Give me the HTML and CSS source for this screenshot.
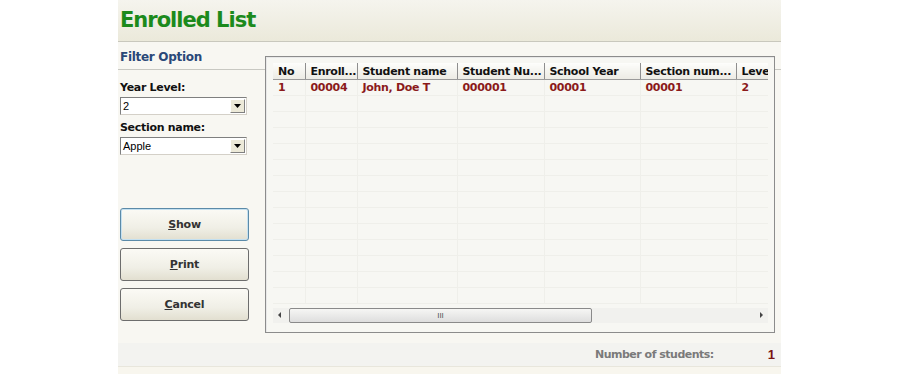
FILE: index.html
```html
<!DOCTYPE html>
<html lang="en">
<head>
    <meta charset="UTF-8">
    <title>Enrolled List</title>
    <link rel="stylesheet" href="styles.css">
</head>
<body>
    <div class="app">
        <header class="title-bar">Enrolled List</header>

        <div class="main">
            <div class="filter">
                <div class="filter-title">Filter Option</div>

                <label class="field-label">Year Level:</label>
                <div class="combo">
                    <span>2</span>
                    <span class="combo-btn"><svg width="7" height="4" viewBox="0 0 7 4"><path d="M0 0h7L3.5 4z" fill="#000"/></svg></span>
                </div>

                <label class="field-label">Section name:</label>
                <div class="combo">
                    <span>Apple</span>
                    <span class="combo-btn"><svg width="7" height="4" viewBox="0 0 7 4"><path d="M0 0h7L3.5 4z" fill="#000"/></svg></span>
                </div>

                <div class="buttons">
                    <button class="btn focused"><u>S</u>how</button>
                    <button class="btn"><u>P</u>rint</button>
                    <button class="btn"><u>C</u>ancel</button>
                </div>
            </div>

            <div class="grid-box">
                <div class="grid-area">
                    <table class="grid">
                        <colgroup>
                            <col style="width:32px">
                            <col style="width:52px">
                            <col style="width:100px">
                            <col style="width:87px">
                            <col style="width:96px">
                            <col style="width:96px">
                            <col style="width:32px">
                        </colgroup>
                        <thead>
                            <tr>
                                <th>No</th>
                                <th>Enroll...</th>
                                <th>Student name</th>
                                <th>Student Nu...</th>
                                <th>School Year</th>
                                <th>Section num...</th>
                                <th>Leve</th>
                            </tr>
                        </thead>
                        <tbody id="rows">
                            <tr class="data">
                                <td>1</td>
                                <td>00004</td>
                                <td>John, Doe T</td>
                                <td>000001</td>
                                <td>00001</td>
                                <td>00001</td>
                                <td>2</td>
                            </tr>
                        </tbody>
                    </table>
                </div>
                <div class="hscroll">
                    <span class="arrow left"></span>
                    <div class="track">
                        <div class="thumb">III</div>
                    </div>
                    <span class="arrow right"></span>
                </div>
            </div>
        </div>

        <div class="status">
            <span class="status-label">Number of students:</span>
            <span class="status-count">1</span>
        </div>
        <div class="bottom"></div>
    </div>

<script>
// fill the empty grid rows under the data row
const rows = document.getElementById('rows');
for (let i = 0; i < 13; i++) {
    const tr = document.createElement('tr');
    tr.className = 'empty';
    for (let c = 0; c < 7; c++) {
        tr.appendChild(document.createElement('td'));
    }
    rows.appendChild(tr);
}
</script>
</body>
</html>
```

FILE: styles.css
```css
body {
    margin: 0;
    background-color: #fff;
    font-family: "DejaVu Sans", Verdana, sans-serif;
}
.app {
    width: 663px;
    margin-left: 118px;
    background-color: #f8f7f2;
}
.title-bar {
    height: 42px;
    box-sizing: border-box;
    padding: 8px 0 0 2px;
    font-size: 21px;
    font-weight: bold;
    letter-spacing: -1px;
    color: #1c8a1c;
    background: linear-gradient(to bottom, #f5f4ee, #ebe9da);
    border-bottom: 1px solid #c9c8bd;
}
.main {
    display: flex;
    height: 301px;
    background: linear-gradient(to bottom, transparent 27px, #c8c8c2 27px, #c8c8c2 28px, transparent 28px);
}
.filter {
    width: 147px;
    display: flex;
    flex-direction: column;
    padding-left: 2px;
    box-sizing: border-box;
}
.filter-title {
    margin-top: 8px;
    height: 31px;
    font-size: 12px;
    font-weight: bold;
    color: #2a4878;
    letter-spacing: -0.3px;
}
.field-label {
    font-size: 11px;
    font-weight: bold;
    color: #111;
    letter-spacing: -0.3px;
    margin-bottom: 3px;
}
.combo {
    width: 127px;
    height: 18px;
    box-sizing: border-box;
    border: 1px solid #7f7f7f;
    border-right-color: #d4d0c8;
    border-bottom-color: #d4d0c8;
    background-color: #fff;
    display: flex;
    align-items: center;
    justify-content: space-between;
    font-family: "Liberation Sans", Arial, sans-serif;
    font-size: 11px;
    padding-left: 2px;
    margin-bottom: 6px;
}
.combo-btn {
    width: 15px;
    height: 14px;
    margin-right: 1px;
    background-color: #ece9d8;
    border: 1px solid #fff;
    border-right-color: #808080;
    border-bottom-color: #808080;
    box-sizing: border-box;
    display: flex;
    align-items: center;
    justify-content: center;
}
.buttons {
    display: flex;
    flex-direction: column;
    gap: 7px;
    margin-top: 47px;
}
.btn {
    width: 129px;
    height: 33px;
    border: 1px solid #6d6d6d;
    border-radius: 3px;
    background: linear-gradient(to bottom, #fbfaf5, #f0efe6 60%, #e2dfd0);
    font-family: "DejaVu Sans", Verdana, sans-serif;
    font-size: 11px;
    font-weight: bold;
    color: #333;
    letter-spacing: -0.2px;
    cursor: pointer;
}
.btn.focused {
    border-color: #5b8aa8;
    box-shadow: inset 0 0 0 1px #c4e0f0;
}
.grid-box {
    margin-top: 14px;
    width: 510px;
    height: 277px;
    box-sizing: border-box;
    border: 1px solid #8c8c8c;
    box-shadow: inset 1px 1px 0 #e8e8e8;
    background-color: #f7f7f3;
    padding: 6px 6px 0 7px;
}
.grid-area {
    height: 245px;
    overflow: hidden;
}
.grid {
    border-collapse: collapse;
    table-layout: fixed;
    width: 495px;
    font-size: 11px;
    font-weight: bold;
    letter-spacing: -0.3px;
}
.grid th {
    height: 16px;
    padding: 0 0 0 5px;
    text-align: left;
    color: #111;
    background: linear-gradient(to bottom, #fdfdfb, #ecebe4);
    border-right: 1px solid #8e8e8e;
    border-bottom: 1px solid #9a9a9a;
    white-space: nowrap;
    overflow: hidden;
}
.grid th:last-child {
    border-right: none;
}
.grid td {
    height: 15px;
    padding: 0 0 0 5px;
    color: #8b1a1a;
    border-right: 1px solid #efefea;
    border-bottom: 1px solid #efefea;
    white-space: nowrap;
    overflow: hidden;
}
.hscroll {
    display: flex;
    align-items: center;
    height: 15px;
    width: 495px;
    background-color: #f1f1ee;
}
.arrow {
    width: 16px;
    height: 15px;
    position: relative;
}
.arrow::after {
    content: "";
    position: absolute;
    top: 4px;
    border-top: 3px solid transparent;
    border-bottom: 3px solid transparent;
}
.arrow.left::after {
    left: 5px;
    border-right: 3px solid #444;
}
.arrow.right::after {
    left: 8px;
    border-left: 3px solid #444;
}
.track {
    flex: 1;
    height: 15px;
}
.thumb {
    width: 303px;
    height: 15px;
    box-sizing: border-box;
    border: 1px solid #8a8a8a;
    border-radius: 2px;
    background: linear-gradient(to bottom, #f6f6f4, #dedede);
    font-family: "Liberation Sans", Arial, sans-serif;
    font-size: 8px;
    line-height: 13px;
    text-align: center;
    color: #555;
}
.status {
    margin-top: 0;
    height: 23px;
    display: flex;
    align-items: center;
    justify-content: flex-end;
    background-color: #f3f3f0;
    border-bottom: 1px solid #e8e6dc;
}
.status-label {
    font-size: 11px;
    font-weight: bold;
    color: #7a7a7a;
    letter-spacing: -0.5px;
    margin-right: 54px;
}
.status-count {
    font-family: "Liberation Sans", Arial, sans-serif;
    font-size: 13px;
    font-weight: bold;
    color: #7a1414;
    margin-right: 6px;
}
.bottom {
    height: 8px;
    background-color: #f8f6ee;
}
```
